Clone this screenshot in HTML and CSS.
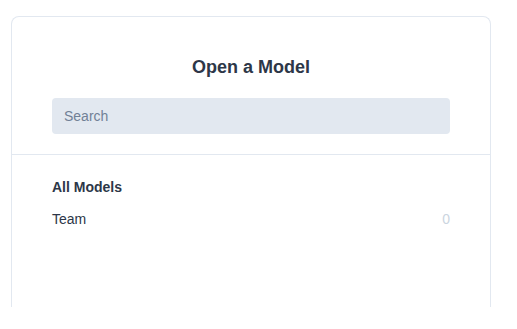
FILE: index.html
```html
<!DOCTYPE html>
<html lang="en">
<head>
    <meta charset="UTF-8">
    <meta name="viewport" content="width=device-width, initial-scale=1.0">
    <title>Open a Model</title>
    <link rel="stylesheet" href="styles.css">
</head>
<body>
    <div class="card">
        <div class="card-header">
            <h2 class="title">Open a Model</h2>
            <input class="search" type="text" placeholder="Search" autofocus>
        </div>
        <div class="card-body">
            <div class="section-title">All Models</div>
            <div class="row">
                <span class="row-name">Team</span>
                <span class="row-count">0</span>
            </div>
        </div>
    </div>
</body>
</html>
```

FILE: styles.css
```css
body {
    margin: 0;
    padding: 16px 26px 0 11px;
    background-color: #ffffff;
    font-family: "Liberation Sans", Arial, sans-serif;
    color: #2d3748;
}
.card {
    width: 478px;
    height: 290px;
    border: 1px solid #e2e8f0;
    border-bottom: 0;
    border-radius: 8px 8px 0 0;
    background-color: #ffffff;
}
.card-header {
    padding: 36px 40px 20px 40px;
    border-bottom: 1px solid #e2e8f0;
}
.title {
    margin: 0 0 17px 0;
    font-size: 18px;
    line-height: 28px;
    font-weight: bold;
    text-align: center;
    color: #2d3748;
}
.search {
    display: block;
    box-sizing: border-box;
    width: 100%;
    height: 36px;
    padding: 0 12px;
    border: none;
    border-left: 0;
    border-radius: 4px;
    background-color: #e2e8f0;
    font-family: inherit;
    font-size: 14px;
    color: #2d3748;
    caret-color: #2d3748;
    outline: none;
}
.search::placeholder {
    color: #718096;
}
.card-body {
    padding: 22px 40px 0 40px;
}
.section-title {
    font-size: 14px;
    line-height: 20px;
    font-weight: bold;
    margin-bottom: 12px;
}
.row {
    display: flex;
    justify-content: space-between;
    font-size: 14px;
    line-height: 20px;
}
.row-name {
    color: #2d3748;
}
.row-count {
    color: #cbd5e0;
}
```
